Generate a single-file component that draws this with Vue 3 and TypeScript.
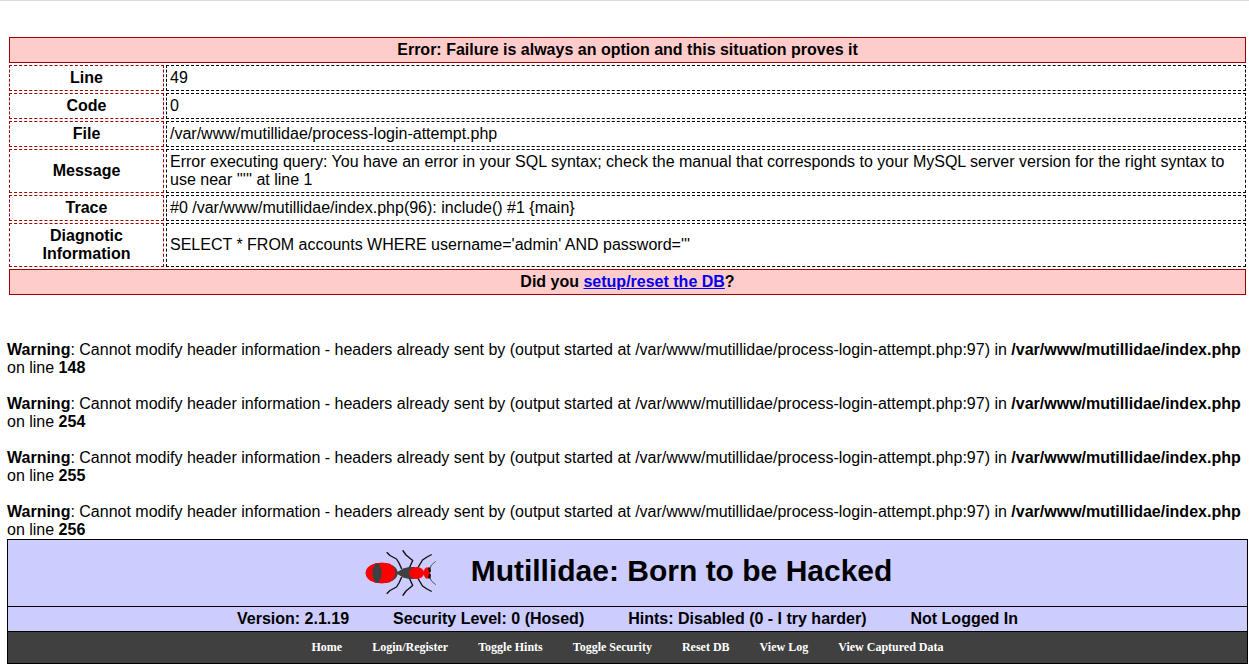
<script setup lang="ts">
interface Detail {
  label: string
  value: string
}

const details: Detail[] = [
  { label: 'Line', value: '49' },
  { label: 'Code', value: '0' },
  { label: 'File', value: '/var/www/mutillidae/process-login-attempt.php' },
  {
    label: 'Message',
    value:
      "Error executing query: You have an error in your SQL syntax; check the manual that corresponds to your MySQL server version for the right syntax to use near ''''' at line 1",
  },
  { label: 'Trace', value: '#0 /var/www/mutillidae/index.php(96): include() #1 {main}' },
  {
    label: 'Diagnotic Information',
    value: "SELECT * FROM accounts WHERE username='admin' AND password='''",
  },
]

const warningLines: number[] = [148, 254, 255, 256]

const status: string[] = [
  'Version: 2.1.19',
  'Security Level: 0 (Hosed)',
  'Hints: Disabled (0 - I try harder)',
  'Not Logged In',
]

const links: string[] = [
  'Home',
  'Login/Register',
  'Toggle Hints',
  'Toggle Security',
  'Reset DB',
  'View Log',
  'View Captured Data',
]
</script>

<template>
  <div class="page">
    <table class="error">
      <thead>
        <tr>
          <th class="banner" colspan="2">Error: Failure is always an option and this situation proves it</th>
        </tr>
      </thead>
      <tbody>
        <tr v-for="row in details" :key="row.label">
          <th class="label" scope="row">{{ row.label }}</th>
          <td>{{ row.value }}</td>
        </tr>
      </tbody>
      <tfoot>
        <tr>
          <th class="banner" colspan="2">Did you <a href="#setup">setup/reset the DB</a>?</th>
        </tr>
      </tfoot>
    </table>

    <div class="warnings">
      <p v-for="line in warningLines" :key="line">
        <b>Warning</b>: Cannot modify header information - headers already sent by (output started at
        /var/www/mutillidae/process-login-attempt.php:97) in <b>/var/www/mutillidae/index.php</b> on line
        <b>{{ line }}</b>
      </p>
    </div>

    <header class="site">
      <div class="title">
        <svg class="ant" viewBox="0 0 72 46" width="72" height="46" aria-hidden="true">
          <g fill="none" stroke="#111" stroke-width="1.4" stroke-linejoin="round">
            <path d="M21.700 2.300L25 5.500L31.500 9L34 13L36.700 19" />
            <path d="M37.700 0.300L41 5L47.700 10.500L44.300 18" />
            <path d="M66.700 4.500L62 7L57.500 10L52.700 18" />
            <path d="M21.700 43.700L25 40.500L31.500 37L34 33L36.700 27" />
            <path d="M37.700 45.700L41 41L47.700 35.500L44.300 28" />
            <path d="M66.700 41.500L62 39L57.500 36L52.700 28" />
            <path d="M65 18L66.500 15L70.700 11.300M65 28L66.500 31L70.700 34.700" stroke="#444" stroke-width="0.900" />
          </g>
          <ellipse cx="16.700" cy="23" rx="16" ry="10.300" fill="#404040" />
          <path d="M27 15.200Q31 18 32.500 22L38 18.500L44 17H50V29H44L38 27.500L32.500 24Q31 28 27 30.800Z" fill="#404040" />
          <path d="M25 13.800Q30.300 17.500 30.300 23Q30.300 28.500 25 32.200Q20 33.300 16.500 33.300C7 33.300 0.700 29 0.700 23S7 12.700 16.500 12.700Q21 12.700 25 13.800Z" fill="#f00" />
          <path d="M10 14Q12 13 14 14Q19.500 23 14 32Q12 33 10 32Q4.500 23 10 14Z" fill="#404040" />
          <ellipse cx="51.700" cy="23" rx="7.500" ry="6" fill="#f00" />
          <ellipse cx="62" cy="23" rx="3.300" ry="5.700" fill="#f00" />
          <path d="M63 17.500H65.500L66 21.500L64 22.500ZM63 28.500H65.500L66 24.500L64 23.500Z" fill="#111" />
        </svg>
        <h1>Mutillidae: Born to be Hacked</h1>
      </div>
      <div class="status">
        <span v-for="item in status" :key="item">{{ item }}</span>
      </div>
      <nav class="menu">
        <a v-for="link in links" :key="link" href="#">{{ link }}</a>
      </nav>
    </header>
  </div>
</template>

<style>
body {
  background: #fff;
}
</style>

<style scoped>
.page {
  border-top: 1px solid #dcdce0;
  padding: 34px 1px 0 7px;
  font: 16px/18px "Liberation Sans", Arial, sans-serif;
  color: #000;
}
.error {
  width: 100%;
  border-spacing: 2px;
}
.error th,
.error td {
  padding: 3px;
}
.error .banner {
  border: 1px solid #900;
  background: #fcc;
}
.banner a {
  color: #00e;
}
.error .label {
  box-sizing: border-box;
  width: 155px;
  border: 1px dashed #900;
}
.error td {
  border: 1px dashed #000;
}
.warnings {
  display: flex;
  flex-direction: column;
  gap: 18px;
  padding-top: 44px;
}
.warnings p {
  margin: 0;
}
.site {
  border: 1px solid #000;
  background: #ccf;
}
.title {
  display: flex;
  justify-content: center;
  align-items: center;
  gap: 34px;
  padding: 10px 0 10px 2px;
}
.title h1 {
  margin: 0 0 4px;
  font-size: 30px;
  line-height: 34px;
}
.status {
  display: flex;
  justify-content: center;
  gap: 44px;
  padding: 3px 0;
  border-top: 1px solid #000;
  border-bottom: 1px solid #000;
  font-weight: bold;
}
.menu {
  display: flex;
  justify-content: center;
  gap: 30px;
  padding: 8px 0;
  background: #404040;
  font: bold 12px/15px "Liberation Serif", "Times New Roman", serif;
}
.menu a {
  color: #fff;
  text-decoration: none;
}
</style>
